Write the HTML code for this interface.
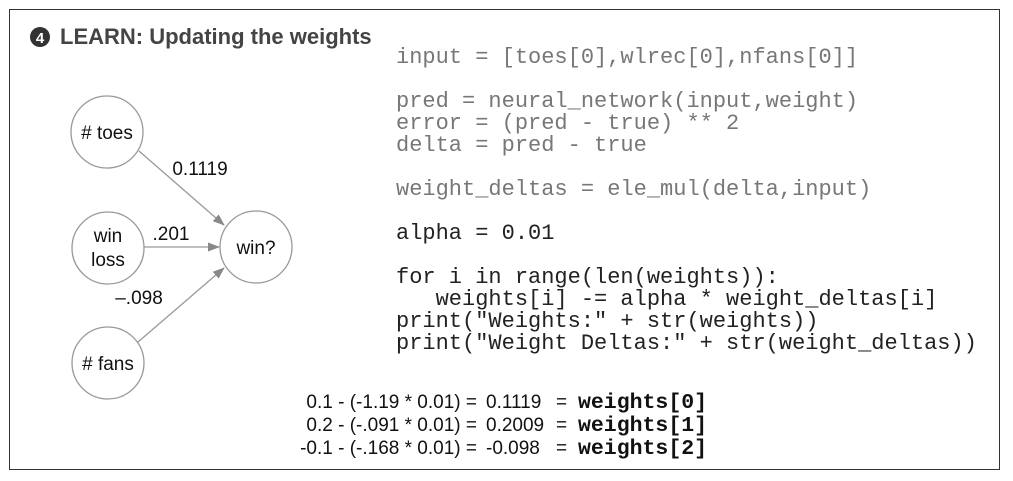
<!DOCTYPE html>
<html><head><meta charset="utf-8"><style>
body{margin:0;width:1013px;height:481px;background:#fff;position:relative;overflow:hidden;font-family:"Liberation Sans",sans-serif}
.box{position:absolute;left:9px;top:9px;width:989px;height:459px;border:1.5px solid #333}
.t{position:absolute;white-space:pre}
.code{position:absolute;left:396px;top:47px;font-family:"Liberation Mono",monospace;font-size:22px;line-height:22px;white-space:pre;color:#777}
.code .d{color:#222}
.eq{position:absolute;font-size:19px;line-height:23px;color:#111;white-space:pre}
.m{position:absolute;font-family:"Liberation Mono",monospace;font-size:21.5px;font-weight:bold;line-height:23px;color:#111;white-space:pre}
</style></head><body>
<div class="box"></div>
<svg width="1013" height="481" style="position:absolute;left:0;top:0">
<defs><marker id="a" markerWidth="12" markerHeight="9" refX="11" refY="4.5" orient="auto" markerUnits="userSpaceOnUse"><path d="M0,0 L12,4.5 L0,9 Z" fill="#888"/></marker></defs>
<circle cx="40" cy="37" r="10" fill="#333"/>
<text x="40" y="43" font-size="15" font-weight="bold" fill="#fff" text-anchor="middle" font-family="Liberation Sans">4</text>
<g fill="none" stroke="#999" stroke-width="1.3">
<circle cx="107" cy="132" r="36"/>
<circle cx="108" cy="248" r="36"/>
<circle cx="108" cy="363" r="36"/>
<circle cx="256" cy="247" r="36"/>
<line x1="139" y1="151" x2="224" y2="225" marker-end="url(#a)"/>
<line x1="144" y1="247" x2="219" y2="247" marker-end="url(#a)"/>
<line x1="138" y1="342" x2="224" y2="268" marker-end="url(#a)"/>
</g>
<g font-family="Liberation Sans" font-size="19" fill="#111" text-anchor="middle">
<text x="107" y="139">#&#160;toes</text>
<text x="108" y="242">win</text>
<text x="108" y="266">loss</text>
<text x="108" y="370">#&#160;fans</text>
<text x="256" y="254">win?</text>
<text x="200" y="175">0.1119</text>
<text x="171" y="240">.201</text>
<text x="139" y="304">–.098</text>
</g>
</svg>
<div class="t" style="left:60px;top:24px;font-size:22px;font-weight:bold;color:#444">LEARN: Updating the weights</div>
<div class="code">input = [toes[0],wlrec[0],nfans[0]]

pred = neural_network(input,weight)
error = (pred - true) ** 2
delta = pred - true

weight_deltas = ele_mul(delta,input)
<span class="d">
alpha = 0.01

for i in range(len(weights)):
   weights[i] -= alpha * weight_deltas[i]
print("Weights:" + str(weights))
print("Weight Deltas:" + str(weight_deltas))</span></div>
<div class="eq" style="right:536px;top:391px;text-align:right">0.1 - (-1.19 * 0.01) =
0.2 - (-.091 * 0.01) =
-0.1 - (-.168 * 0.01) =</div>
<div class="eq" style="left:486px;top:391px">0.1119
0.2009
-0.098</div>
<div class="eq" style="left:556px;top:391px">=
=
=</div>
<div class="m" style="left:578px;top:392px">weights[0]
weights[1]
weights[2]</div>
</body></html>
